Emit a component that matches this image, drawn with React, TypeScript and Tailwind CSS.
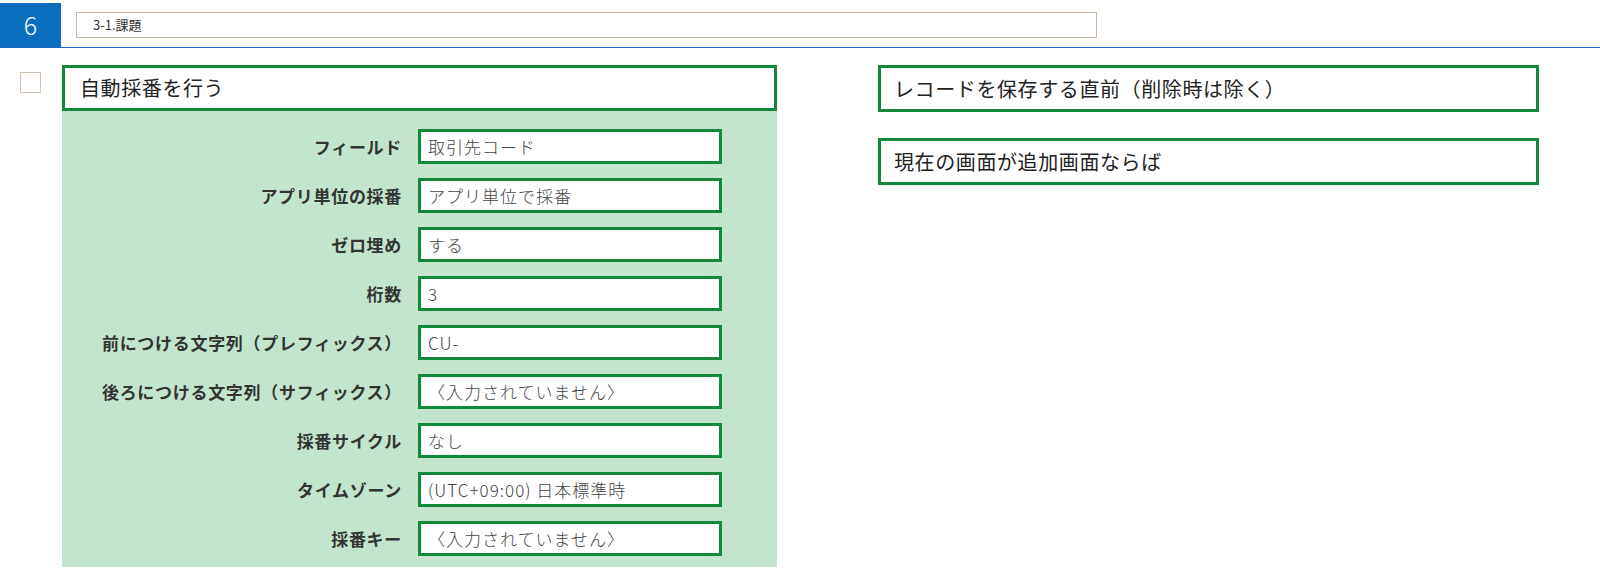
const fields = [
  { label: "フィールド", value: "取引先コード" },
  { label: "アプリ単位の採番", value: "アプリ単位で採番" },
  { label: "ゼロ埋め", value: "する" },
  { label: "桁数", value: "3" },
  { label: "前につける文字列（プレフィックス）", value: "CU-" },
  { label: "後ろにつける文字列（サフィックス）", value: "〈入力されていません〉" },
  { label: "採番サイクル", value: "なし" },
  { label: "タイムゾーン", value: "(UTC+09:00) 日本標準時" },
  { label: "採番キー", value: "〈入力されていません〉" },
];

const font = { fontFamily: '"Noto Sans CJK JP", "Noto Sans", sans-serif' };

const App = () => {
  return (
    <div className="w-[1600px] h-[577px] bg-white text-[#222]" style={font}>
      {/* header bar */}
      <div className="flex items-start h-[48px] border-b border-[#1a6cc4]">
        <div className="w-[61px] h-[44px] mt-[3px] bg-[#0a6ebd] text-white text-[25px] font-light flex items-center justify-center">
          6
        </div>
        <div className="ml-[15px] mt-[12px] w-[1021px] h-[26px] border border-[#c9b59b] flex items-center pl-[16px] text-[13px] text-[#333]">
          3-1.課題
        </div>
      </div>

      <div className="flex items-start pt-[17px]">
        {/* checkbox */}
        <div className="ml-[20px] mt-[7px] w-[21px] h-[21px] border border-[#d2c2ad] bg-white" />

        {/* left: auto numbering */}
        <div className="ml-[21px] w-[715px]">
          <div className="h-[46px] border-[3px] border-[#12893a] flex items-center pl-[15px] text-[20px] tracking-[0.6px] text-[#222]">
            自動採番を行う
          </div>
          <div className="bg-[#c4e5cd] pt-[18px] pb-[11px] grid grid-cols-[340px_304px] gap-x-[16px] gap-y-[14px]">
            {fields.map((f) => (
              <div key={f.label} className="contents">
                <div className="h-[35px] flex items-center justify-end text-[17px] tracking-[0.7px] font-bold text-[#333]">
                  {f.label}
                </div>
                <div className="h-[35px] bg-white border-[3px] border-[#12893a] flex items-center pl-[7px] text-[17px] tracking-[1px] font-light text-[#444]">
                  {f.value}
                </div>
              </div>
            ))}
          </div>
        </div>

        {/* right: conditions */}
        <div className="ml-[101px] w-[661px] flex flex-col gap-[26px]">
          <div className="h-[47px] border-[3px] border-[#12893a] flex items-center pl-[13px] text-[20px] tracking-[0.6px] text-[#222]">
            レコードを保存する直前（削除時は除く）
          </div>
          <div className="h-[47px] border-[3px] border-[#12893a] flex items-center pl-[13px] text-[20px] tracking-[0.6px] text-[#222]">
            現在の画面が追加画面ならば
          </div>
        </div>
      </div>
    </div>
  );
};

export default App;
